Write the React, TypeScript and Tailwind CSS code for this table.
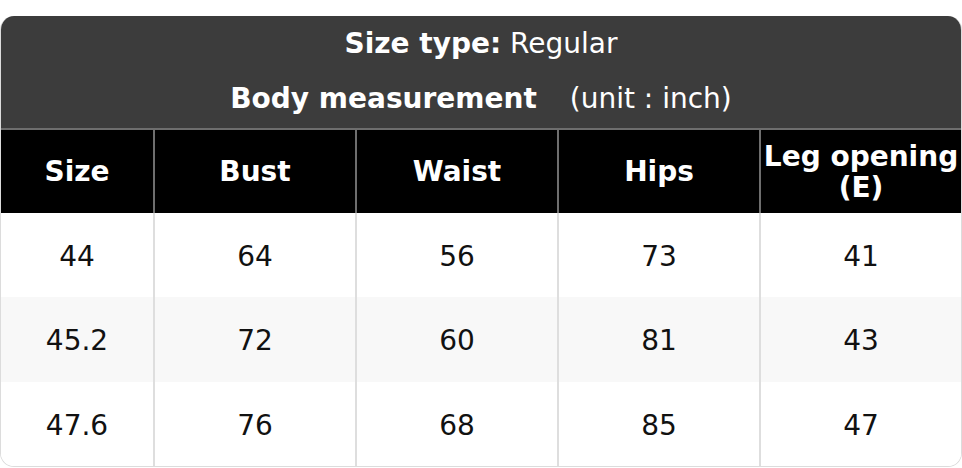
import React from "react"

const columns = ["Size", "Bust", "Waist", "Hips", "Leg opening (E)"]

const rows = [
    ["44", "64", "56", "73", "41"],
    ["45.2", "72", "60", "81", "43"],
    ["47.6", "76", "68", "85", "47"],
]

const rowHeights = ["h-[84px]", "h-[85px]", "h-[84px]"]

export default function App() {
    return (
        <main className="bg-white min-h-screen pt-4 font-['DejaVu_Sans',sans-serif] text-[28px]">
            <div className="rounded-[14px] overflow-hidden border-x border-b border-[#dcdcdc]">
                {/* title band */}
                <div className="bg-[#3c3c3c] text-white text-center leading-[28px] pt-[14px] pb-[15px]">
                    <p>
                        <span className="font-bold">Size type:</span> Regular
                    </p>
                    <p className="mt-[27px]">
                        <span className="font-bold">Body measurement</span>
                        <span className="ml-[33px]">(unit : inch)</span>
                    </p>
                </div>

                {/* column heads */}
                <div className="grid grid-cols-[152px_1fr_1fr_1fr_1fr] bg-black text-white font-bold border-t-2 border-[#6e6e6e] h-[85px]">
                    {columns.map((col, i) => (
                        <div
                            key={col}
                            className={`flex items-center justify-center text-center leading-[31px] ${i > 0 ? "border-l-2 border-[#6e6e6e]" : ""}`}
                        >
                            {col === "Leg opening (E)" ? (
                                <span>
                                    Leg opening
                                    <br />
                                    (E)
                                </span>
                            ) : (
                                col
                            )}
                        </div>
                    ))}
                </div>

                {/* body */}
                {rows.map((row, r) => (
                    <div
                        key={r}
                        className={`grid grid-cols-[152px_1fr_1fr_1fr_1fr] text-[#111] ${rowHeights[r]} ${r === 1 ? "bg-[#f8f8f8]" : "bg-white"}`}
                    >
                        {row.map((val, i) => (
                            <div
                                key={i}
                                className={`flex items-center justify-center pt-[3px] ${i > 0 ? "border-l-2 border-[#dedede]" : ""}`}
                            >
                                {val}
                            </div>
                        ))}
                    </div>
                ))}
            </div>
        </main>
    )
}
